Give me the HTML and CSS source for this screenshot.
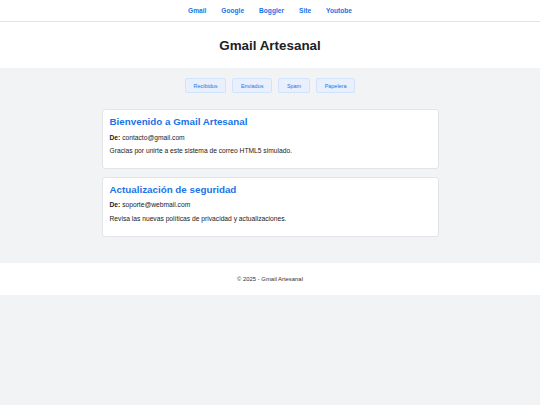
FILE: index.html
```html
<!DOCTYPE html>
<html lang="es">
<head>
<meta charset="utf-8">
<title>Gmail Artesanal</title>
<link rel="stylesheet" href="styles.css">
</head>
<body>
<nav class="topnav">
  <a href="#">Gmail</a>
  <a href="#">Google</a>
  <a href="#">Boggler</a>
  <a href="#">Site</a>
  <a href="#">Youtobe</a>
</nav>
<header class="site-header">
  <h1>Gmail Artesanal</h1>
</header>
<main class="content">
  <div class="tabs">
    <button class="tab">Recibidos</button>
    <button class="tab">Enviados</button>
    <button class="tab">Spam</button>
    <button class="tab">Papelera</button>
  </div>
  <section class="mail-list">
    <article class="mail">
      <h3>Bienvenido a Gmail Artesanal</h3>
      <p><strong>De:</strong> contacto@gmail.com</p>
      <p>Gracias por unirte a este sistema de correo HTML5 simulado.</p>
    </article>
    <article class="mail">
      <h3>Actualización de seguridad</h3>
      <p><strong>De:</strong> soporte@webmail.com</p>
      <p>Revisa las nuevas políticas de privacidad y actualizaciones.</p>
    </article>
  </section>
</main>
<footer class="site-footer">© 2025 - Gmail Artesanal</footer>
</body>
</html>
```
FILE: styles.css
```css
html, body {
  margin: 0;
  padding: 0;
}
body {
  font-family: "Liberation Sans", Arial, sans-serif;
  font-size: 6.7px;
  color: #202124;
  background: #f1f3f4;
}
.topnav {
  height: 21px;
  background: #fff;
  border-bottom: 1px solid #e4e4e4;
  display: flex;
  justify-content: center;
  align-items: center;
  gap: 15px;
}
.topnav a {
  color: #1a73e8;
  font-weight: bold;
  font-size: 6.6px;
  text-decoration: none;
}
.site-header {
  background: #fff;
  height: 46px;
  display: flex;
  align-items: center;
  justify-content: center;
}
.site-header h1 {
  margin: 0;
  font-size: 13.4px;
  font-weight: bold;
  color: #202124;
}
.content {
  padding: 10px 0 26px;
}
.tabs {
  display: flex;
  justify-content: center;
  gap: 6.5px;
}
.tab {
  height: 15px;
  padding: 0 7.5px;
  margin: 0;
  background: #e8f0fe;
  border: 1px solid #d2e3fc;
  border-radius: 2px;
  color: #1a73e8;
  font-family: "Liberation Sans", Arial, sans-serif;
  font-size: 5.46px;
}
.mail-list {
  width: 337px;
  margin: 16px auto 0;
  display: flex;
  flex-direction: column;
  gap: 7.5px;
}
.mail {
  background: #fff;
  border: 1px solid #e2e4e7;
  border-radius: 3px;
  padding: 6px 7px 7px;
}
.mail h3 {
  margin: 0 0 5.5px;
  font-size: 9.8px;
  color: #1a73e8;
  font-weight: bold;
}
.mail p {
  margin: 6.5px 0;
}
.mail p:last-child {
  margin-bottom: 7px;
}
.site-footer {
  background: #fff;
  height: 32px;
  display: flex;
  align-items: center;
  justify-content: center;
  font-size: 5.9px;
  color: #333;
}
```
